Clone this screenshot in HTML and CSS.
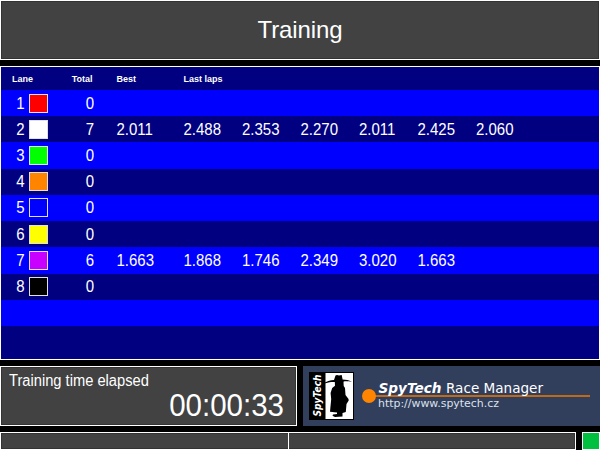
FILE: index.html
```html
<!DOCTYPE html>
<html lang="en">
<head>
<meta charset="utf-8">
<title>Training</title>
<link rel="stylesheet" href="styles.css">
</head>
<body>
<main class="screen">
  <header class="panel title"><h1>Training</h1></header>

  <section class="board">
    <div class="row head"><span class="lane-h">Lane</span><span class="total-h">Total</span><span class="best">Best</span><span class="laps-h">Last laps</span></div>
    <div class="row"><span class="lane">1</span><i class="swatch red"></i><span class="total">0</span></div>
    <div class="row"><span class="lane">2</span><i class="swatch white"></i><span class="total">7</span><span class="best">2.011</span><span>2.488</span><span>2.353</span><span>2.270</span><span>2.011</span><span>2.425</span><span>2.060</span></div>
    <div class="row"><span class="lane">3</span><i class="swatch green"></i><span class="total">0</span></div>
    <div class="row"><span class="lane">4</span><i class="swatch orange"></i><span class="total">0</span></div>
    <div class="row"><span class="lane">5</span><i class="swatch blue"></i><span class="total">0</span></div>
    <div class="row"><span class="lane">6</span><i class="swatch yellow"></i><span class="total">0</span></div>
    <div class="row"><span class="lane">7</span><i class="swatch purple"></i><span class="total">6</span><span class="best">1.663</span><span>1.868</span><span>1.746</span><span>2.349</span><span>3.020</span><span>1.663</span></div>
    <div class="row"><span class="lane">8</span><i class="swatch black"></i><span class="total">0</span></div>
    <div class="row"></div>
  </section>

  <section class="bottom">
    <div class="panel timer">
      <div class="label">Training time elapsed</div>
      <div class="clock">00:00:33</div>
    </div>
    <div class="brand">
      <svg width="297" height="60" viewBox="0 0 297 60">
        <rect x="6" y="6" width="45" height="48" fill="#000"/>
        <rect x="22.5" y="7" width="27.5" height="46" fill="#fff"/>
        <text class="logo-name" transform="translate(18 50.5) rotate(-90)" textLength="42" lengthAdjust="spacingAndGlyphs">SpyTech</text>
        <path d="M32.5 9.5L34 9L36 9.6L38.7 9L39.6 13.4C43 13.4 46 14 49 16C44 15.2 41.7 15.2 40.5 15.8L40.7 20L42 22L42.5 29L45.5 33L45.7 34.5L43.5 38L42.8 46L39.5 47L39.5 50.6L32 51L29.5 49.8L30 48.6L34 48L34 46.6L27 45.8L28.2 33L27.6 27L29.2 22L32 19.8L31.8 16C28 15.8 25 16.4 19 18C24 15.4 27 14.2 31 14Z" fill="#000"/>
        <rect x="66" y="29" width="221" height="2" fill="#c06a16"/>
        <circle cx="66" cy="30" r="7" fill="#ff8400"/>
        <text class="brand-bold" x="75.5" y="27" textLength="63" lengthAdjust="spacingAndGlyphs">SpyTech</text>
        <text class="brand-text" x="143" y="27" textLength="97" lengthAdjust="spacingAndGlyphs">Race Manager</text>
        <text class="brand-url" x="75" y="41" textLength="121" lengthAdjust="spacingAndGlyphs">http://www.spytech.cz</text>
      </svg>
    </div>
  </section>

  <footer class="status">
    <div class="panel bar"><div class="part"></div></div>
    <div class="lamp"></div>
  </footer>
</main>
</body>
</html>
```

FILE: styles.css
```css
* { box-sizing: border-box; }

body {
  margin: 0;
  background: #000;
  color: #fff;
  font-family: "Liberation Sans", Arial, sans-serif;
}

.screen {
  display: flex;
  flex-direction: column;
  gap: 6px;
  width: 600px;
  height: 450px;
  overflow: hidden;
}

.panel {
  background: #424242;
  border: 1px solid #fff;
  box-shadow: inset 0 0 0 1px #333;
}

.title { height: 60px; }

h1 {
  margin: 0;
  font-size: 24px;
  font-weight: 400;
  line-height: 58px;
  text-align: center;
  letter-spacing: -0.1px;
}

.board {
  height: 294px;
  background: #000080;
  border: 1px solid #fff;
}

.row {
  display: flex;
  align-items: center;
  height: 26.22px;
  font-size: 15px;
}

.row:nth-child(even) { background: #00f; }

/* condensed lettering: slightly taller than the regular face */
.row span {
  width: 58.5px;
  transform: scaleY(1.08);
}

.head {
  height: 23px;
  font-size: 9px;
  font-weight: 700;
}

.row .lane {
  width: 23.5px;
  text-align: right;
}

.swatch {
  width: 19px;
  height: 19px;
  margin-left: 4.5px;
  border: 1px solid #e0e0e0;
}

.row .total {
  width: 46px;
  text-align: right;
}

.row .best {
  width: 67px;
  margin-left: 22.5px;
}

.row .lane-h {
  width: 47px;
  padding-left: 11px;
}

.row .total-h {
  width: 44.5px;
  margin-right: 1.5px;
  text-align: right;
}

.red { background: #f00; }
.white { background: #fff; }
.green { background: #0f0; }
.orange { background: #ff8400; }
.blue { background: #00f; }
.yellow { background: #ff0; }
.purple { background: #c800ff; }
.black { background: #000; }

.bottom {
  display: flex;
  gap: 6px;
  height: 60px;
}

.timer {
  width: 297px;
  padding: 6px 12px 0 8px;
}

.label {
  font-size: 14.7px;
  line-height: 17px;
  transform: scaleY(1.06);
}

.clock {
  font-size: 29.5px;
  line-height: 30px;
  text-align: right;
  transform: scaleY(1.06);
}

.brand {
  width: 297px;
  background: #313e5c;
}

.brand svg { display: block; }

.brand text {
  fill: #fff;
  font-family: "DejaVu Sans", Verdana, sans-serif;
}

.brand .logo-name {
  font-size: 10px;
  font-weight: 700;
  font-style: italic;
}

.brand .brand-bold {
  font-size: 13.5px;
  font-weight: 700;
  font-style: italic;
}

.brand .brand-text { font-size: 13.5px; }

.brand .brand-url {
  font-size: 11.2px;
  fill: #dde1ea;
}

.status {
  display: flex;
  gap: 6px;
  height: 18px;
}

.bar { width: 576px; }

.part {
  width: 288px;
  height: 16px;
  border-right: 1px solid #fff;
}

.lamp {
  width: 18px;
  background: #00c040;
  border: 1px solid #fff;
}
```
